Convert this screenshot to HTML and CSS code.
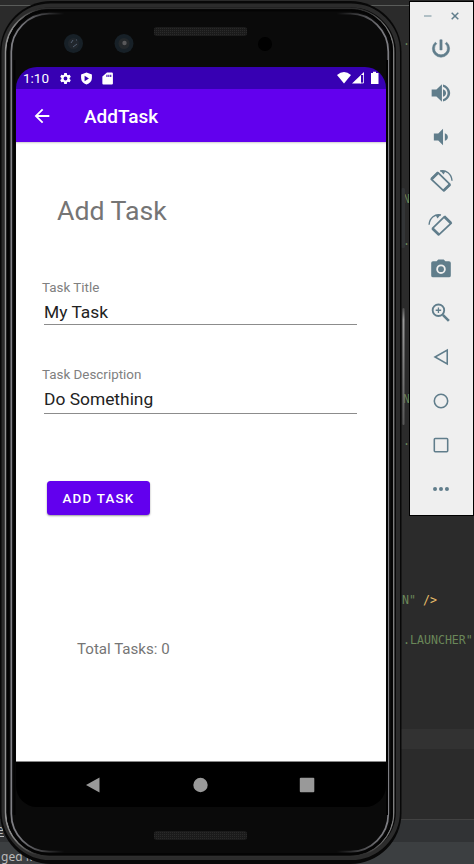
FILE: index.html
```html
<!DOCTYPE html>
<html lang="en">
<head>
<meta charset="utf-8">
<title>AddTask</title>
<link rel="stylesheet" href="styles.css">
</head>
<body>
<main class="desktop">
  <div class="editor">
    <div class="editor-top"></div>
    <div class="caret-row"></div>
    <div class="panel-row"></div>
    <div class="status-row"></div>
  </div>
  <span class="code c1">.</span>
  <span class="code c2">N</span>
  <span class="code c3">.</span>
  <span class="code c4">N</span>
  <span class="code c5">.</span>
  <span class="code c6">N" <b>/&gt;</b></span>
  <span class="code c7">.LAUNCHER"</span>
  <span class="ide i1">e</span>
  <span class="ide i2">ged M</span>

  <section class="phone">
    <svg class="frame" width="409" height="864" viewBox="0 0 409 864" fill="none">
      <defs>
        <linearGradient id="a" gradientUnits="userSpaceOnUse" x1="0" y1="0" x2="401" y2="0">
          <stop offset="0" stop-color="#999"/><stop offset=".03" stop-color="#888"/><stop offset=".09" stop-color="#2e2e2e"/>
          <stop offset=".91" stop-color="#2e2e2e"/><stop offset=".97" stop-color="#777"/><stop offset="1" stop-color="#888"/>
        </linearGradient>
        <linearGradient id="b" gradientUnits="userSpaceOnUse" x1="0" y1="0" x2="401" y2="0">
          <stop offset="0" stop-color="#8a8a90"/><stop offset=".05" stop-color="#77777c"/><stop offset=".16" stop-color="#0a0a0a"/>
          <stop offset=".84" stop-color="#0a0a0a"/><stop offset=".95" stop-color="#77777c"/><stop offset="1" stop-color="#8a8a90"/>
        </linearGradient>
        <linearGradient id="k" x1="0" y1="0" x2="0" y2="1">
          <stop offset="0" stop-color="#4a4a4a"/><stop offset=".1" stop-color="#999"/><stop offset="1" stop-color="#555"/>
        </linearGradient>
        <pattern id="m" width="2" height="2" patternUnits="userSpaceOnUse">
          <rect width="2" height="2" fill="#1b1b1b"/><rect width="1" height="1" fill="#2a2a2a"/>
        </pattern>
      </defs>
      <rect x="401" y="188" width="4" height="60" rx="1.5" fill="#333537"/>
      <rect x="401" y="307" width="2.5" height="118" fill="#2b2b2b"/>
      <rect x="402.5" y="308" width="2" height="117" rx="1" fill="url(#k)"/>
      <rect x="0" y="1" width="401.5" height="863" rx="51" fill="#080808"/>
      <rect x="3.5" y="5.5" width="394.5" height="852.5" rx="47" stroke="#2c2c2c" stroke-width="4"/>
      <rect x="5.6" y="8.2" width="388" height="848" rx="44" stroke="url(#a)" stroke-width="1.6"/>
      <rect x="6.500" y="9" width="386.500" height="846.500" rx="43" fill="#0a0a0a"/>
      <rect x="8" y="10.500" width="384" height="843.500" rx="41" stroke="#040404" stroke-width="2"/>
      <rect x="11.3" y="13.7" width="377" height="838" rx="38" stroke="url(#b)" stroke-width="1.700"/>
      <path d="M14.5 60V815M387 60V815" stroke="#020202" stroke-width="2"/>
      <circle cx="73.5" cy="43.5" r="9.5" fill="#172027"/><circle cx="73.5" cy="43.5" r="5.5" fill="#20262c"/>
      <path d="M71 43l2-3M73 47l4-3M76 40h1" stroke="#536071"/>
      <circle cx="124" cy="43.5" r="9.5" fill="#172027"/><circle cx="124" cy="43.5" r="5.5" fill="#24282b"/>
      <circle cx="124.500" cy="43" r="2.200" fill="#59595b"/>
      <circle cx="265" cy="44" r="7" fill="#010101"/>
      <rect x="154" y="27" width="93" height="9" rx="3" fill="url(#m)"/>
      <rect x="154" y="831" width="93" height="9" rx="3" fill="url(#m)"/>
    </svg>
    <div class="screen">
      <header class="status">
        <span class="clock">1:10</span>
        <svg class="s-ic" viewBox="0 0 24 24"><path d="M19.430 12.980c.04-.32.07-.64.07-.98s-.03-.66-.07-.98l2.110-1.650c.19-.15.24-.42.12-.64l-2-3.460c-.12-.22-.39-.3-.61-.22l-2.490 1c-.52-.4-1.080-.73-1.690-.98l-.38-2.650C14.460 2.180 14.250 2 14 2h-4c-.25 0-.46.18-.49.42l-.38 2.650c-.61.25-1.170.59-1.690.98l-2.490-1c-.23-.09-.49 0-.61.22l-2 3.460c-.13.22-.07.49.12.64l2.110 1.650c-.04.32-.07.65-.07.98s.03.66.07.98l-2.110 1.650c-.19.15-.24.42-.12.64l2 3.460c.12.22.39.3.61.22l2.490-1c.52.4 1.080.73 1.690.98l.38 2.650c.03.24.24.42.49.42h4c.25 0 .46-.18.49-.42l.38-2.650c.61-.25 1.170-.59 1.690-.98l2.490 1c.23.09.49 0 .61-.22l2-3.460c.12-.22.07-.49-.12-.64zM12 15.500a3.500 3.500 0 1 1 0-7 3.500 3.500 0 0 1 0 7z"/></svg>
        <svg class="s-ic" viewBox="0 0 24 24"><path fill-rule="evenodd" d="M12 1l10 3.500V11c0 5.500-4 10.200-10 12C6 21.200 2 16.500 2 11V4.500zM8.500 7v10l8-5z"/></svg>
        <svg class="s-ic" viewBox="0 0 24 24"><path fill-rule="evenodd" d="M20 1h-9L2.500 8.500V21a2 2 0 0 0 2 2h15.500a2 2 0 0 0 2-2V3a2 2 0 0 0-2-2zM10 5h2v4h-2zm3.500 0h2v4h-2zM17 5h2v4h-2z"/></svg>
        <svg class="signals" viewBox="0 0 43 14"><path d="M0 4Q7-1.800 14 4L7 12.500z"/><path d="M15 12.500L27 1v3h-3v8.500z"/><path d="M26.500 2v10h-3" fill="none" stroke="#fff" stroke-width=".8"/><path d="M34 2h2V.8h3V2h2.500v11H34z"/></svg>
      </header>
      <nav class="appbar">
        <svg class="back" viewBox="0 0 24 24"><path d="M20 11H7.830l5.590-5.590L12 4l-8 8 8 8 1.410-1.410L7.830 13H20v-2z"/></svg>
        <h1>AddTask</h1>
      </nav>
      <div class="content">
        <h2>Add Task</h2>
        <label class="l1">Task Title</label>
        <div class="field">My Task</div>
        <label class="l2">Task Description</label>
        <div class="field f2">Do Something</div>
        <button>ADD TASK</button>
        <p>Total Tasks: 0</p>
      </div>
      <footer class="navbar">
        <svg viewBox="0 0 16 16"><path d="M1 8L14.500.5v15z"/></svg>
        <svg viewBox="0 0 16 16"><circle cx="8.500" cy="8" r="7.200"/></svg>
        <svg viewBox="0 0 16 16"><rect x=".8" y=".8" width="14.500" height="14.500" rx="1"/></svg>
      </footer>
    </div>
  </section>

  <aside class="tools">
    <div class="window-row">
      <svg width="10" height="10"><path d="M1 5h7.500" stroke="#a5b6bd" stroke-width="1.700"/></svg>
      <svg width="10" height="10"><path d="M1.700 1.700l6.600 6.600M8.300 1.700L1.700 8.300" stroke="#607d8b" stroke-width="1.500"/></svg>
    </div>
    <svg class="t" viewBox="0 0 24 24"><path d="M13.200 2h-2.400v11h2.400zm5 2.500l-1.600 1.600A6.990 6.990 0 1 1 7.400 6.100L5.800 4.500a9.400 9.400 0 1 0 12.400 0z" stroke="#607d8b" stroke-width=".6"/></svg>
    <svg class="t" viewBox="0 0 24 24"><path d="M1.800 8.200v7.600H7l6 5.700V2.500L7 8.200zM17.500 12c0-1.800-1-3.500-3.300-4.200v8.400c2.300-.7 3.300-2.400 3.300-4.200zM14.200 2.700v2.500c2.900.9 5 3.600 5 6.800s-2.100 5.900-5 6.800v2.500c4-.9 7.800-4.700 7.800-9.300s-3.800-8.400-7.800-9.300z"/></svg>
    <svg class="t" viewBox="0 0 24 24"><path d="M4.200 8.300v7.400H9l5.200 5.200V3.100L9 8.300zM19.500 12c0-1.800-1-3.500-3.300-4.200v8.400c2.300-.7 3.300-2.400 3.300-4.200z"/></svg>
    <svg class="t rot" viewBox="0 0 24 24"><g fill="none" stroke="#607d8b"><path d="M8.700 2.800L21.800 15.700 15 22.800 1.300 9.900z" stroke-width="1.900" stroke-linejoin="round"/><path d="M1.800 9.900L9 2.800M14.800 22.500l7-6.800" stroke-width="3"/><path d="M11 1.200c6.500-1.500 12.500 3 13 10.500" stroke-width="1.500"/></g><path d="M11 .2l6 .8-2.200 3.800z"/></svg>
    <svg class="t rot" viewBox="0 0 24 24"><g transform="matrix(-1 0 0 1 24 0)"><g fill="none" stroke="#607d8b"><path d="M8.200 2.800L21.300 15.700 14.500 22.800.8 9.900z" stroke-width="1.900" stroke-linejoin="round"/><path d="M1.300 9.900L8.500 2.800M14.300 22.500l7-6.800" stroke-width="3"/><path d="M12 1.200c6.500-1.500 12.500 3 13 10.500" stroke-width="1.500"/></g><path d="M12 .2l6 .8-2.200 3.800z"/></g></svg>
    <svg class="t" viewBox="0 0 24 24"><path fill-rule="evenodd" d="M9 1.500L7.200 3.500H3.300a2 2 0 0 0-2 2v13.500a2 2 0 0 0 2 2h17.400a2 2 0 0 0 2-2V5.500a2 2 0 0 0-2-2h-3.900L15 1.500zM12 7a5.200 5.200 0 1 1 0 10.400A5.200 5.200 0 0 1 12 7z"/><circle cx="12" cy="12.200" r="3.200"/></svg>
    <svg class="t" viewBox="0 0 24 24"><g fill="none" stroke="#607d8b"><circle cx="9.200" cy="9" r="6.300" stroke-width="2"/><path d="M14 14l6.600 6.600" stroke-width="2.800"/><path d="M6.200 9h6M9.200 6v6" stroke-width="1.400"/></g></svg>
    <svg class="t line" viewBox="0 0 24 24"><path d="M5.500 12L18.800 4.500v15z"/></svg>
    <svg class="t line" viewBox="0 0 24 24"><circle cx="12" cy="12" r="7.300"/></svg>
    <svg class="t line" viewBox="0 0 24 24"><rect x="4.700" y="4.900" width="14.600" height="14.400" rx="1"/></svg>
    <svg class="t" viewBox="0 0 24 24"><circle cx="5.500" cy="12" r="2.200"/><circle cx="12" cy="12" r="2.200"/><circle cx="18.500" cy="12" r="2.200"/></svg>
  </aside>
</main>
</body>
</html>
```

FILE: styles.css
```css
* { box-sizing: border-box; }
body { margin: 0; background: #2b2b2b; font-family: Roboto, sans-serif; }
svg { display: block; flex: none; }
.desktop { position: relative; width: 474px; height: 864px; overflow: hidden; }

.editor { display: flex; flex-direction: column; height: 864px; padding-top: 5px; }
.editor-top { height: 724px; border-top: 1px solid #5a5c5a; }
.caret-row { height: 20px; background: #323232; margin-bottom: 70px; }
.panel-row { height: 23px; background: #313335; border-top: 1px solid #424242; }
.status-row { height: 22px; background: #3c3f41; }

.code { position: absolute; font: 11.6px/16px "DejaVu Sans Mono", monospace; color: #6a8759; white-space: pre; }
.code b { font-weight: 400; color: #e8bf6a; }
.c1 { left: 403px; top: 33px; }
.c2 { left: 403px; top: 191px; }
.c3 { left: 403px; top: 233px; }
.c4 { left: 403px; top: 391px; }
.c5 { left: 403px; top: 433px; }
.c6 { left: 402px; top: 592px; }
.c7 { left: 403px; top: 632px; }
.ide { position: absolute; font: 12px/16px "Noto Sans", sans-serif; color: #bbb; }
.i1 { left: -3px; top: 823px; line-height: 13px; border-bottom: 1px solid #bbb; }
.i2 { left: 1px; top: 849px; }

.phone { position: absolute; left: 0; top: 0; width: 409px; height: 864px; padding: 67px 0 0 16px; }
.frame { position: absolute; left: 0; top: 0; }
.screen { position: relative; width: 370px; height: 740px; border-radius: 21px; overflow: hidden; display: flex; flex-direction: column; }
.status { height: 22px; background: #3700b3; display: flex; align-items: center; padding: 0 6px 0 7px; flex: none; }
.clock { width: 36px; font-size: 13.5px; line-height: 22px; color: #fff; }
.s-ic { width: 13px; height: 13px; fill: #fff; margin-right: 8px; }
.signals { width: 43px; height: 14px; fill: #fff; margin-left: auto; }
.appbar { height: 53px; background: #6200ee; display: flex; align-items: center; padding-left: 15px; flex: none; }
.back { width: 22px; height: 22px; fill: #fff; }
h1 { margin: 2px 0 0 31px; font-size: 19px; font-weight: 500; color: #fff; line-height: 24px; }
.content { flex: 1; background: #fff; display: flex; flex-direction: column; align-items: flex-start; padding-left: 26px; box-shadow: inset 0 2px 2px -1px #ccc; }
h2 { margin: 51px 0 0 15px; font-size: 26.7px; font-weight: 400; line-height: 36px; color: #757575; }
label { font-size: 13.4px; line-height: 18px; color: #808080; }
.l1 { margin-top: 50px; }
.l2 { margin-top: 41px; }
.field { width: 313px; height: 28px; margin-left: 2px; border-bottom: 1px solid #8c8c8c; font-size: 17.400px; line-height: 31px; color: #222; }
.f2 { height: 30px; }
button { margin: 67px 0 0 5px; width: 103px; height: 34px; border: 0; border-radius: 3.500px; padding: 0; background: #6200ee; color: #fff; font: 500 13.4px/35px Roboto, sans-serif; letter-spacing: 1.2px; box-shadow: 0 1px 2px rgba(0,0,0,.4); }
p { margin: 124px 0 0 35px; font-size: 15.1px; line-height: 20px; color: #757575; }
.navbar { height: 46px; background: #000; border-top: 1px solid #888; display: flex; align-items: center; gap: 91px; padding-left: 69px; flex: none; }
.navbar svg { width: 16px; height: 16px; fill: #999; }

.tools { position: absolute; left: 409px; top: 1px; width: 65px; height: 515px; background: #efefef; border: 1px solid #000; display: flex; flex-direction: column; align-items: center; padding: 9px 2px 0 0; }
.window-row { display: flex; gap: 17px; height: 10px; margin: 0 0 17px 2px; }
.t { width: 22px; height: 22px; margin-bottom: 22px; fill: #607d8b; }
.rot { overflow: visible; }
.line { fill: none; stroke: #607d8b; stroke-width: 1.7; }
```
